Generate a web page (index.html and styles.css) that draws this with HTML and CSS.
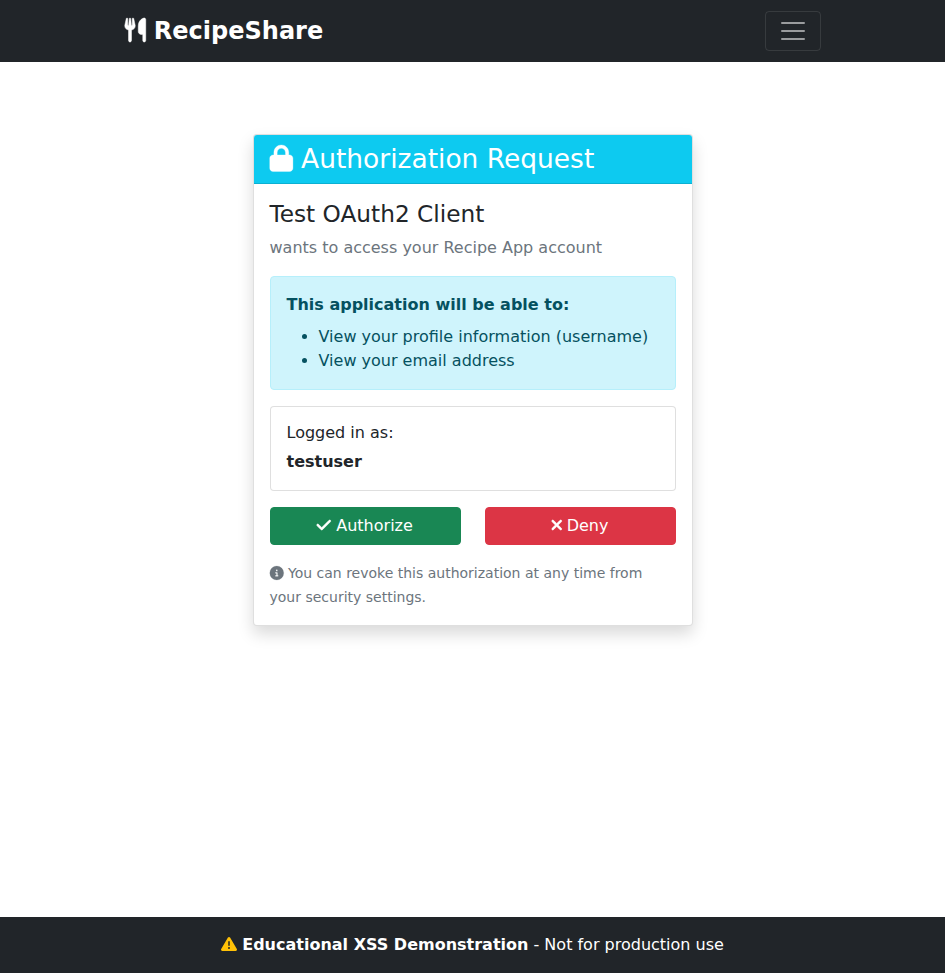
FILE: index.html
```html
<!DOCTYPE html>
<html lang="en">
<head>
<meta charset="utf-8">
<title>Authorization Request - RecipeShare</title>
<link rel="stylesheet" href="styles.css">
</head>
<body>
<nav class="navbar">
  <div class="container navbar-inner">
    <a class="brand"><svg class="icon w448" viewBox="0 0 448 512"><path d="M416 0C400 0 288 32 288 176V288c0 35.300 28.700 64 64 64h32V480c0 17.700 14.300 32 32 32s32-14.300 32-32V32c0-17.700-14.300-32-32-32zM64 16C64 7.800 57.900 1 49.700 .1S34.200 4.600 32.400 12.500L2.100 148.800C.7 155.100 0 161.500 0 167.900c0 45.900 35.100 83.600 80 87.700V480c0 17.700 14.300 32 32 32s32-14.300 32-32V255.600c44.900-4.100 80-41.800 80-87.700c0-6.400-.7-12.800-2.100-19.100L191.600 12.500c-1.800-8-9.300-13.300-17.400-12.400S160 7.800 160 16V150.200c0 5.400-4.400 9.800-9.800 9.800c-5.100 0-9.300-3.900-9.800-9L127.900 14.600C127.200 6.300 120.300 0 112 0s-15.200 6.300-15.900 14.600L83.700 151c-.5 5.100-4.700 9-9.800 9c-5.400 0-9.800-4.400-9.800-9.800V16z"/></svg> RecipeShare</a>
    <button class="toggler" aria-label="Toggle navigation"><svg class="toggler-icon" viewBox="0 0 30 30"><path d="M4 7h22M4 15h22M4 23h22"/></svg></button>
  </div>
</nav>
<main class="container main">
  <section class="card shadow">
    <div class="card-header">
      <h3><svg class="icon w448" viewBox="0 0 448 512"><path d="M144 144v48H304V144c0-44.200-35.800-80-80-80s-80 35.800-80 80zM80 192V144C80 64.500 144.500 0 224 0s144 64.500 144 144v48h16c35.300 0 64 28.700 64 64V448c0 35.300-28.700 64-64 64H64c-35.300 0-64-28.700-64-64V256c0-35.300 28.700-64 64-64H80z"/></svg> Authorization Request</h3>
    </div>
    <div class="card-body">
      <h4>Test OAuth2 Client</h4>
      <p class="muted">wants to access your Recipe App account</p>
      <div class="alert">
        <strong>This application will be able to:</strong>
        <ul>
          <li>View your profile information (username)</li>
          <li>View your email address</li>
        </ul>
      </div>
      <div class="card account">
        <div class="card-body">
          <h6>Logged in as:</h6>
          <p class="username"><strong>testuser</strong></p>
        </div>
      </div>
      <div class="actions">
        <button class="btn success"><svg class="icon w448" viewBox="0 0 448 512"><path d="M438.600 105.400c12.500 12.500 12.500 32.800 0 45.300l-256 256c-12.500 12.500-32.800 12.500-45.300 0l-128-128c-12.500-12.500-12.500-32.800 0-45.300s32.800-12.500 45.300 0L160 338.700 393.400 105.400c12.500-12.500 32.800-12.500 45.300 0z"/></svg> Authorize</button>
        <button class="btn danger"><svg class="icon w320" viewBox="32 0 320 512"><path d="M342.600 150.600c12.500-12.500 12.500-32.800 0-45.300s-32.800-12.500-45.300 0L192 210.700 86.600 105.400c-12.500-12.500-32.800-12.500-45.300 0s-12.500 32.800 0 45.300L146.700 256 41.400 361.400c-12.500 12.500-12.500 32.800 0 45.300s32.800 12.500 45.300 0L192 301.300 297.400 406.600c12.500 12.500 32.800 12.500 45.300 0s12.500-32.800 0-45.300L237.300 256 342.600 150.600z"/></svg> Deny</button>
      </div>
      <p class="note muted"><small><svg class="icon w512" viewBox="0 0 512 512"><path d="M256 512A256 256 0 1 0 256 0a256 256 0 1 0 0 512zM216 336h24V272H216c-13.300 0-24-10.700-24-24s10.700-24 24-24h48c13.300 0 24 10.700 24 24v88h8c13.300 0 24 10.700 24 24s-10.700 24-24 24H216c-13.300 0-24-10.700-24-24s10.700-24 24-24zm40-208a32 32 0 1 1 0 64 32 32 0 1 1 0-64z"/></svg> You can revoke this authorization at any time from your security settings.</small></p>
    </div>
  </section>
</main>
<footer class="footer">
  <p><svg class="icon w512 warning" viewBox="0 0 512 512"><path d="M256 32c14.200 0 27.300 7.500 34.500 19.800l216 368c7.300 12.400 7.300 27.700 .2 40.100S486.300 480 472 480H40c-14.300 0-27.600-7.700-34.700-20.100s-7-27.800 .2-40.100l216-368C228.700 39.500 241.800 32 256 32zm0 128c-13.300 0-24 10.700-24 24V296c0 13.300 10.700 24 24 24s24-10.700 24-24V184c0-13.300-10.700-24-24-24zm32 224a32 32 0 1 0 -64 0 32 32 0 1 0 64 0z"/></svg> <strong>Educational XSS Demonstration</strong> - Not for production use</p>
</footer>
</body>
</html>
```
FILE: styles.css
```css
*, *::before, *::after { box-sizing: border-box; }
body {
  margin: 0;
  min-height: 100vh;
  display: flex;
  flex-direction: column;
  font-family: "DejaVu Sans", sans-serif;
  font-size: 16px;
  line-height: 1.5;
  color: #212529;
  background: #fff;
}
h3, h4, h6, p, ul { margin: 0; }
h3, h4, h6 { font-weight: 500; line-height: 1.2; }
h3 { font-size: calc(1.3rem + .6vw); }
h4 { font-size: calc(1.275rem + .3vw); margin-bottom: 8px; }
h6 { font-size: 16px; margin-bottom: 8px; }
strong { font-weight: bolder; }
small { font-size: .875em; }
.icon { display: inline-block; height: 1em; vertical-align: -.125em; fill: currentColor; overflow: visible; }
.brand .icon, .card .icon { transform: translateX(-.25px); }
.brand path { stroke: currentColor; stroke-width: 10; }
.card-header path, .note path { stroke: currentColor; stroke-width: 6; }
.btn path { stroke: currentColor; stroke-width: 18; }
.w320 { width: .625em; }
.w448 { width: .875em; }
.w512 { width: 1em; }
.container { width: 100%; max-width: 720px; margin: 0 auto; padding: 0 12px; }
.navbar { background: #212529; padding: 8px 0; }
.navbar-inner { display: flex; align-items: center; justify-content: space-between; }
.brand { color: #fff; font-size: 24px; font-weight: 700; padding: 5px 0; white-space: nowrap; }
.toggler {
  display: block;
  padding: 4px 12px;
  background: transparent;
  border: 1px solid rgba(255, 255, 255, .1);
  border-radius: 4px;
}
.toggler-icon { display: block; width: 30px; height: 30px; fill: none; stroke: rgba(255, 255, 255, .55); stroke-width: 2; stroke-linecap: round; }
.main { flex: 1; padding-top: 72px; }
.card { background: #fff; border: 1px solid rgba(0, 0, 0, .125); background-clip: border-box; border-radius: 4px; }
.shadow { width: 440px; margin: 0 auto; box-shadow: 0 8px 16px rgba(0, 0, 0, .15); }
.card-header {
  padding: 8px 16px;
  color: #fff;
  background: #0dcaf0;
  border-bottom: 1px solid rgba(0, 0, 0, .125);
  border-radius: 3px 3px 0 0;
}
.card-body { padding: 16px; }
.muted { color: #6c757d; }
.alert {
  margin: 16px 0;
  padding: 16px;
  color: #055160;
  background: #cff4fc;
  border: 1px solid #b6effb;
  border-radius: 4px;
}
.alert ul { margin-top: 8px; padding-left: 32px; }
.account { margin-bottom: 16px; }
.actions { display: grid; grid-template-columns: 1fr 1fr; gap: 24px; }
.btn {
  padding: 6px 12px;
  border: 1px solid transparent;
  border-radius: 4px;
  font: inherit;
  color: #fff;
  text-align: center;
}
.success { background: #198754; border-color: #198754; }
.danger { background: #dc3545; border-color: #dc3545; }
.note { margin-top: 16px; }
.footer { padding: 16px 0; background: #212529; color: #fff; text-align: center; }
.warning { color: #ffc107; }
```
